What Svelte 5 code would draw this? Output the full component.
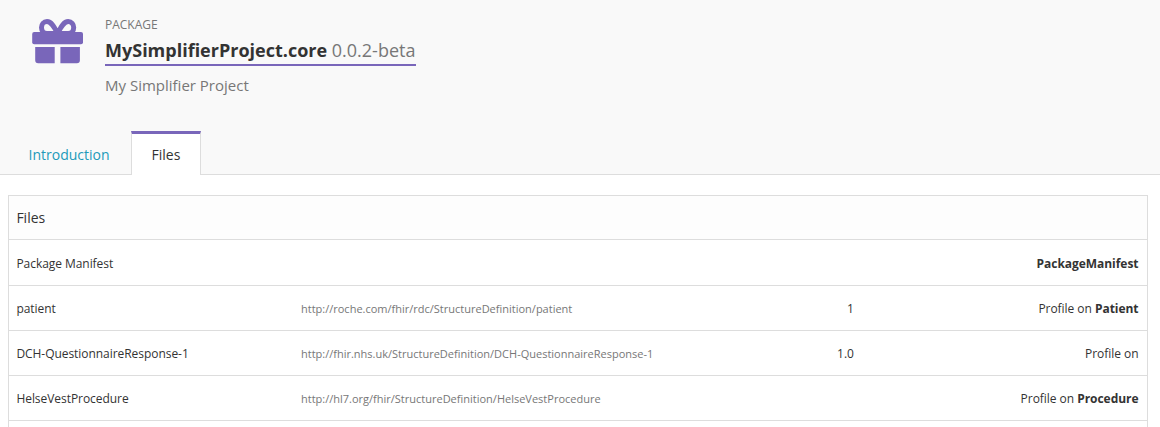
<script>
  const files = [
    { name: 'Package Manifest', url: '', version: '', prefix: '', type: 'PackageManifest' },
    { name: 'patient', url: 'http://roche.com/fhir/rdc/StructureDefinition/patient', version: '1', prefix: 'Profile on ', type: 'Patient' },
    { name: 'DCH-QuestionnaireResponse-1', url: 'http://fhir.nhs.uk/StructureDefinition/DCH-QuestionnaireResponse-1', version: '1.0', prefix: 'Profile on', type: '' },
    { name: 'HelseVestProcedure', url: 'http://hl7.org/fhir/StructureDefinition/HelseVestProcedure', version: '', prefix: 'Profile on ', type: 'Procedure' }
  ];
</script>

<div class="page">
  <header>
    <div class="identity">
      <svg class="gift" width="52" height="46" viewBox="0 0 52 46" aria-hidden="true">
        <path d="M25.6 15.5 C21.8 8 19.2 3.6 15 3.6 C11.6 3.6 9.5 6.3 9.5 9.5 C9.5 12.9 11.7 15.5 15 15.5 H36.2 C39.5 15.5 41.7 12.9 41.7 9.5 C41.7 6.3 39.6 3.6 36.2 3.6 C32 3.6 29.4 8 25.6 15.5 Z" fill="none" stroke="#7966ba" stroke-width="5" stroke-linejoin="round" />
        <rect x="0.2" y="13.9" width="50.8" height="12.4" rx="2" />
        <path d="M3.2 29H22.7V45.2H6.2Q3.2 45.2 3.2 42.2ZM28.4 29H47.9V42.2Q47.9 45.2 44.9 45.2H28.4Z" />
      </svg>
      <div class="titles">
        <div class="kind">PACKAGE</div>
        <h1><strong>MySimplifierProject.core</strong> <span>0.0.2-beta</span></h1>
        <p>My Simplifier Project</p>
      </div>
    </div>
    <nav>
      <a class="tab" href="#introduction">Introduction</a>
      <a class="tab active" href="#files">Files</a>
    </nav>
  </header>
  <main>
    <section class="panel">
      <h2>Files</h2>
      {#each files as file}
        <div class="row">
          <span class="name">{file.name}</span>
          <span class="url">{file.url}</span>
          <span class="version">{file.version}</span>
          <span class="type">{file.prefix}<b>{file.type}</b></span>
        </div>
      {/each}
      <div class="row"></div>
    </section>
  </main>
</div>

<style>
  :global(body) { background: #fff; }
  .page {
    height: 427px;
    overflow: hidden;
    font-family: "Open Sans", "Noto Sans", sans-serif;
    color: #333;
  }
  header {
    height: 175px;
    box-sizing: border-box;
    display: flex;
    flex-direction: column;
    justify-content: space-between;
    background: #f9f9f9;
    border-bottom: 1px solid #ddd;
  }
  .identity { display: flex; padding: 18px 0 0 32px; }
  .gift { fill: #7966ba; flex: none; }
  .titles {
    display: flex;
    flex-direction: column;
    align-items: flex-start;
    margin-left: 21px;
    white-space: nowrap;
    color: #777;
  }
  .kind { font-size: 12px; line-height: 14px; }
  h1 {
    margin: 5px 0 0;
    width: 311px;
    height: 27px;
    line-height: 27px;
    font-size: 18px;
    font-weight: 400;
    border-bottom: 2px solid #7966ba;
  }
  h1 strong { color: #333; font-weight: 700; }
  p { margin: 9px 0 0; font-size: 15px; line-height: 21px; }
  nav { display: flex; height: 44px; padding-left: 8px; margin-bottom: -1px; }
  .tab {
    box-sizing: border-box;
    width: 123px;
    padding-left: 20.5px;
    border-top: 3px solid transparent;
    font-size: 14px;
    line-height: 41px;
    color: #2199ba;
    text-decoration: none;
  }
  .tab.active {
    width: 70px;
    padding: 0;
    text-align: center;
    color: #333;
    background: #fff;
    border: 1px solid #ddd;
    border-top: 3px solid #7966ba;
    border-bottom: 0;
  }
  main { padding: 20px 12px 0 8px; }
  .panel { border: 1px solid #ddd; border-bottom: 0; }
  h2 {
    margin: 0;
    padding-left: 7.4px;
    height: 43px;
    line-height: 43px;
    font-size: 14px;
    font-weight: 400;
    background: #fdfdfd;
  }
  .row {
    box-sizing: border-box;
    height: 45px;
    display: grid;
    grid-template-columns: 284.6px 484px 69px 1fr;
    align-items: center;
    padding: 2px 8.5px 0 7.4px;
    border-top: 1px solid #ddd;
    font-size: 12px;
    line-height: 18px;
    white-space: nowrap;
  }
  h2 + .row { height: 46px; }
  .name { letter-spacing: -0.05px; }
  .type { letter-spacing: -0.04px; }
  .url { font-size: 11px; color: #777; }
  .version, .type { text-align: right; }
</style>
